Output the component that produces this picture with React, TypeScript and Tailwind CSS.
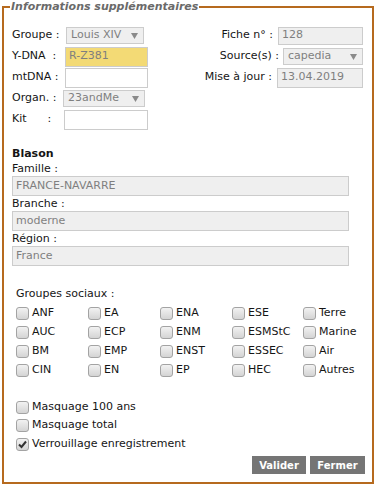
import React from "react";

const Caret = () => (
  <svg className="w-[7px] h-[6px] shrink-0" viewBox="0 0 7 6">
    <path d="M0 0h7L3.5 6z" fill="#8a8a8a" />
  </svg>
);

const Select = ({ value, className }: { value: string; className: string }) => (
  <div className={`h-[17px] flex items-center justify-between pl-[4px] pr-[5px] border border-[#cccccc] bg-[#efefef] text-[#7f7f7f] ${className}`}>
    <span>{value}</span>
    <Caret />
  </div>
);

const Input = ({ value = "", className }: { value?: string; className: string }) => (
  <div className={`h-[20px] flex items-center pl-[3px] border border-[#cccccc] text-[#7f7f7f] ${className}`}>
    {value}
  </div>
);

const Check = ({ checked = false }: { checked?: boolean }) => (
  <span className="relative w-[13px] h-[13px] shrink-0 rounded-[3px] border border-[#a3a3a3] bg-gradient-to-b from-[#f2f2f2] to-[#d4d4d4]">
    {checked && (
      <svg className="absolute left-[1px] top-[1px] w-[9px] h-[9px]" viewBox="0 0 9 9">
        <path d="M1 4.5l2.5 2.5L8 1.5" fill="none" stroke="#333" strokeWidth="2" />
      </svg>
    )}
  </span>
);

const groupes = [
  ["ANF", "EA", "ENA", "ESE", "Terre"],
  ["AUC", "ECP", "ENM", "ESMStC", "Marine"],
  ["BM", "EMP", "ENST", "ESSEC", "Air"],
  ["CIN", "EN", "EP", "HEC", "Autres"],
];

export default function App() {
  return (
    <div className="w-[376px] h-[486px] bg-white font-['DejaVu_Sans',sans-serif] text-[11px] text-[#151515]">
      <fieldset className="ml-[2px] w-[372px] min-w-0 h-[484px] border-2 border-[#b66a1e]">
        <legend className="ml-[6px] px-[1px] leading-[13px] font-bold italic text-[#6a6a6a]">
          Informations supplémentaires
        </legend>

        <div className="pl-[8px] pr-[9px]">
          {/* top part */}
          <div className="flex mt-[12px]">
            <div className="w-[140px]">
              <div className="h-[21px] flex items-center">
                <span className="w-[50px]">Groupe :</span>
                <Select value="Louis XIV" className="ml-[4px] w-[78px]" />
              </div>
              <div className="h-[21px] flex items-center">
                <span className="w-[50px]">Y-DNA&nbsp;&nbsp;:</span>
                <Input value="R-Z381" className="ml-[3px] w-[83px] bg-[#f3da75]" />
              </div>
              <div className="h-[21px] flex items-center">
                <span className="w-[50px]">mtDNA :</span>
                <Input className="ml-[3px] w-[83px] bg-white" />
              </div>
              <div className="h-[21px] flex items-center">
                <span className="w-[50px]">Organ. :</span>
                <Select value="23andMe" className="ml-[1px] w-[82px]" />
              </div>
              <div className="h-[21px] flex items-center">
                <span className="w-[50px]">Kit&nbsp;&nbsp;&nbsp;&nbsp;&nbsp;&nbsp;:</span>
                <Input className="ml-[2px] w-[84px] bg-white" />
              </div>
            </div>

            <div className="flex-1">
              <div className="h-[21px] flex items-center justify-end gap-[5px]">
                <span>Fiche n° :</span>
                <div className="w-[85px] h-[18px] flex items-center pl-[3px] border border-[#cccccc] bg-[#efefef] text-[#7f7f7f]">128</div>
              </div>
              <div className="h-[21px] flex items-center justify-end gap-[4px]">
                <span>Source(s) :</span>
                <Select value="capedia" className="w-[80px]" />
              </div>
              <div className="h-[21px] flex items-center justify-end gap-[5px]">
                <span>Mise à jour :</span>
                <Input value="13.04.2019" className="w-[86px] bg-[#efefef]" />
              </div>
            </div>
          </div>

          {/* blason */}
          <div className="mt-[16px] w-[337px]">
            <div className="leading-[15px] font-bold">Blason</div>
            <div className="leading-[15px]">Famille :</div>
            <Input value="FRANCE-NAVARRE" className="w-full bg-[#efefef]" />
            <div className="leading-[15px]">Branche :</div>
            <Input value="moderne" className="w-full bg-[#efefef]" />
            <div className="leading-[15px]">Région :</div>
            <Input value="France" className="w-full bg-[#efefef]" />
          </div>

          {/* groupes sociaux */}
          <div className="pl-[4px]">
            <div className="mt-[21px] leading-[14px]">Groupes sociaux :</div>
            <div className="mt-[3px]">
              {groupes.map((row, i) => (
                <div key={i} className="h-[19px] grid grid-cols-[72px_72px_72px_71px_1fr] items-center">
                  {row.map((g) => (
                    <label key={g} className="flex items-center gap-[3px]">
                      <Check />
                      <span>{g}</span>
                    </label>
                  ))}
                </div>
              ))}
            </div>

            <div className="mt-[18px]">
              <label className="h-[18px] flex items-center gap-[3px]">
                <Check />
                <span>Masquage 100 ans</span>
              </label>
              <label className="h-[19px] flex items-center gap-[3px]">
                <Check />
                <span>Masquage total</span>
              </label>
              <label className="h-[19px] flex items-center gap-[3px]">
                <Check checked />
                <span>Verrouillage enregistrement</span>
              </label>
            </div>
          </div>

          <div className="mt-[2px] -mr-[2px] flex justify-end gap-[4px]">
            <button className="w-[54px] h-[18px] bg-[#757575] text-white font-bold text-[10px]">Valider</button>
            <button className="w-[55px] h-[18px] bg-[#757575] text-white font-bold text-[10px]">Fermer</button>
          </div>
        </div>
      </fieldset>
    </div>
  );
}
